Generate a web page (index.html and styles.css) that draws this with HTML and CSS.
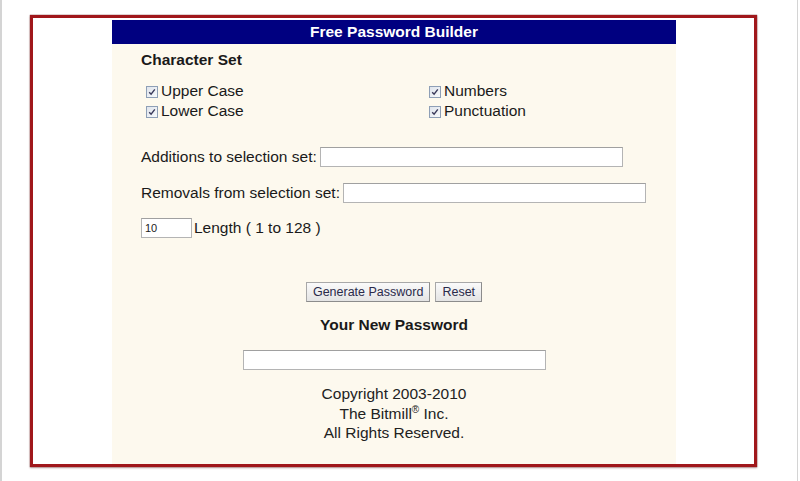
FILE: index.html
```html
<!DOCTYPE html>
<html lang="en">
<head>
<meta charset="utf-8">
<title>Free Password Builder</title>
<link rel="stylesheet" href="styles.css">
</head>
<body>
<div class="page">
  <div class="frame">
    <form class="panel" onsubmit="return false">
      <div class="title">Free Password Builder</div>
      <div class="content">
        <div class="section-head">Character Set</div>
        <div class="charset">
          <label class="opt"><span class="box"><svg viewBox="0 0 8 8" width="8" height="8"><path d="M1.2 4.2 L3.1 6.2 L6.8 1.4" fill="none" stroke="#3a3a5a" stroke-width="1.4"/></svg></span>Upper Case</label>
          <label class="opt"><span class="box"><svg viewBox="0 0 8 8" width="8" height="8"><path d="M1.2 4.2 L3.1 6.2 L6.8 1.4" fill="none" stroke="#3a3a5a" stroke-width="1.4"/></svg></span>Numbers</label>
          <label class="opt"><span class="box"><svg viewBox="0 0 8 8" width="8" height="8"><path d="M1.2 4.2 L3.1 6.2 L6.8 1.4" fill="none" stroke="#3a3a5a" stroke-width="1.4"/></svg></span>Lower Case</label>
          <label class="opt"><span class="box"><svg viewBox="0 0 8 8" width="8" height="8"><path d="M1.2 4.2 L3.1 6.2 L6.8 1.4" fill="none" stroke="#3a3a5a" stroke-width="1.4"/></svg></span>Punctuation</label>
        </div>
        <div class="field field-first">
          <span class="label">Additions to selection set:</span>
          <input class="text wide" type="text">
        </div>
        <div class="field">
          <span class="label">Removals from selection set:</span>
          <input class="text wide" type="text">
        </div>
        <div class="field field-length">
          <input class="text small" type="text" value="10">
          <span class="label">Length ( 1 to 128 )</span>
        </div>
        <div class="buttons">
          <button class="btn" type="button">Generate Password</button>
          <button class="btn" type="button">Reset</button>
        </div>
        <div class="result-head">Your New Password</div>
        <div class="result">
          <input class="text result-input" type="text">
        </div>
        <div class="copyright">
          <div>Copyright 2003-2010</div>
          <div>The Bitmill<sup>®</sup> Inc.</div>
          <div>All Rights Reserved.</div>
        </div>
      </div>
    </form>
  </div>
</div>
</body>
</html>
```
FILE: styles.css
```css
html, body {
  margin: 0;
  padding: 0;
  height: 481px;
  overflow: hidden;
  background: #ffffff;
}

body {
  font-family: "Liberation Sans", Arial, sans-serif;
  font-size: 15.5px;
  color: #1a1a1a;
}

.page {
  box-sizing: border-box;
  width: 798px;
  height: 481px;
  border-left: 2px solid #d4d4d4;
  border-right: 1px solid #d4d4d4;
  padding: 15px 0 0 28px;
}

.frame {
  box-sizing: border-box;
  width: 727px;
  height: 452px;
  border: 3px solid #a0171b;
  box-shadow: 0 0 1px #5a0a0a, 0 1px 2px rgba(80, 0, 0, 0.35);
  padding-top: 2px;
  background: #fff;
}

.panel {
  width: 564px;
  height: 444px;
  margin: 0 auto 0 79px;
  background: #fdf9ee;
}

.title {
  height: 24px;
  line-height: 24px;
  background: #000080;
  color: #ffffff;
  font-weight: bold;
  text-align: center;
}

.content {
  padding: 0 0 0 29px;
  line-height: 20px;
}

.section-head {
  font-weight: bold;
  margin-top: 6px;
}

.charset {
  display: grid;
  grid-template-columns: 283px auto;
  margin: 11px 0 0 5px;
}

.opt {
  display: flex;
  align-items: center;
  height: 20px;
}

.box {
  box-sizing: border-box;
  width: 12px;
  height: 12px;
  margin: 1px 3px 0 0;
  border: 1px solid #8e9fb6;
  background: linear-gradient(135deg, #dfe4ec 0%, #f7f9fb 100%);
  display: flex;
  align-items: center;
  justify-content: center;
}

.field {
  display: flex;
  align-items: center;
  gap: 3px;
  margin-top: 16px;
}

.field-first {
  margin-top: 26px;
}

.field-length {
  margin-top: 15px;
}

.text {
  box-sizing: border-box;
  height: 20px;
  border: 1px solid #b4b4b4;
  border-top-color: #a0a0a0;
  background: #ffffff;
  padding: 0 3px;
  font-family: "Liberation Sans", Arial, sans-serif;
  font-size: 11px;
  color: #222;
  outline: none;
}

.wide {
  width: 303px;
}

.small {
  width: 51px;
  margin-right: -1px;
}

.buttons {
  display: flex;
  justify-content: center;
  gap: 5px;
  margin: 44px 29px 0 0;
}

.btn {
  box-sizing: border-box;
  height: 20px;
  padding: 0 6px;
  border: 1px solid #a8a8a8;
  border-right-color: #8c8c8c;
  border-bottom-color: #8c8c8c;
  background: linear-gradient(#fafafa, #e4e4e4);
  font-family: "Liberation Sans", Arial, sans-serif;
  font-size: 12.5px;
  color: #2a2a4a;
  line-height: 18px;
}

.result-head {
  font-weight: bold;
  text-align: center;
  margin: 13px 29px 0 0;
}

.result {
  display: flex;
  justify-content: center;
  margin: 15px 29px 0 0;
}

.result-input {
  width: 303px;
}

.copyright {
  text-align: center;
  margin: 14px 29px 0 0;
  line-height: 19.5px;
  color: #222;
}

.copyright sup {
  font-size: 10px;
  line-height: 0;
  vertical-align: 6px;
}
```
